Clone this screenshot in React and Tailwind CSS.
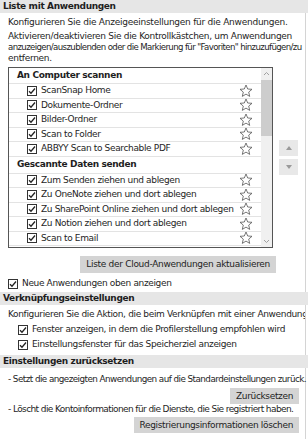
import React from 'react';

const Check = () => (
    <span className="w-[10px] h-[10px] border border-[#333] bg-white flex items-center justify-center shrink-0">
        <svg width="8" height="8" viewBox="0 0 8 8"><path d="M1 4.2 L3 6.2 L7 1.5" fill="none" stroke="#222" strokeWidth="1.3" /></svg>
    </span>
);

const Star = () => (
    <svg width="14" height="14" viewBox="0 0 14 14" className="shrink-0">
        <path d="M7 1 L8.7 5 L13 5.3 L9.7 8.1 L10.7 12.4 L7 10.1 L3.3 12.4 L4.3 8.1 L1 5.3 L5.3 5 Z" fill="none" stroke="#555" strokeWidth="0.8" strokeLinejoin="round" />
    </svg>
);

const SectionHeader = ({ title }) => (
    <div className="h-[13px] bg-[#e6e6e6] px-[3px] flex items-center font-bold">{title}</div>
);

const Row = ({ label }) => (
    <div className="h-[14.5px] border-b border-[#e3e3e3] flex items-center pl-[18px] pr-[8px] gap-[4px]">
        <Check />
        <span className="flex-1 whitespace-nowrap overflow-hidden">{label}</span>
        <Star />
    </div>
);

const scanApps = ['ScanSnap Home', 'Dokumente-Ordner', 'Bilder-Ordner', 'Scan to Folder', 'ABBYY Scan to Searchable PDF'];
const sendApps = ['Zum Senden ziehen und ablegen', 'Zu OneNote ziehen und dort ablegen', 'Zu SharePoint Online ziehen und dort ablegen', 'Zu Notion ziehen und dort ablegen', 'Scan to Email', 'Scan to Print'];

export default function App() {
    return (
        <div className="w-[308px] h-[439px] overflow-hidden bg-white text-[9px] leading-[11px] tracking-[-0.35px] text-[#1e1e1e] font-['DejaVu_Sans',sans-serif]">
            <SectionHeader title="Liste mit Anwendungen" />
            <div className="mr-[2px] border-r border-[#d4d4d4] pl-[8px] pr-[6px] pt-[4px] pb-[3px]">
                <p className="whitespace-nowrap tracking-[-0.25px]">Konfigurieren Sie die Anzeigeeinstellungen für die Anwendungen.</p>
                <p className="mt-[3px] whitespace-nowrap tracking-[-0.3px]">
                    Aktivieren/deaktivieren Sie die Kontrollkästchen, um Anwendungen<br />
                    <span className="text-[8.6px] tracking-[-0.62px]">anzuzeigen/auszublenden oder die Markierung für "Favoriten" hinzuzufügen/zu</span><br />
                    entfernen.
                </p>
                <div className="flex mt-[3px] gap-[6px]">
                    <div className="w-[265px] h-[181px] border border-[#555] flex overflow-hidden">
                        <div className="flex-1 overflow-hidden">
                            <div className="h-[16px] border-b border-[#e3e3e3] flex items-center pl-[8px] font-bold">An Computer scannen</div>
                            {scanApps.map(a => <Row key={a} label={a} />)}
                            <div className="h-[17px] flex items-center pl-[8px] font-bold border-b border-[#e3e3e3]">Gescannte Daten senden</div>
                            {sendApps.map(a => <Row key={a} label={a} />)}
                        </div>
                        <div className="w-[11px] bg-[#f0f0f0] flex flex-col">
                            <div className="h-[11px] flex items-center justify-center">
                                <svg width="7" height="5" viewBox="0 0 7 5"><path d="M1 4 L3.5 1.5 L6 4" fill="none" stroke="#a0a0a0" /></svg>
                            </div>
                            <div className="h-[56px] bg-[#cdcdcd] mt-[1px]" />
                            <div className="flex-1" />
                            <div className="h-[11px] flex items-center justify-center">
                                <svg width="7" height="5" viewBox="0 0 7 5"><path d="M1 1 L3.5 3.5 L6 1" fill="none" stroke="#a0a0a0" /></svg>
                            </div>
                        </div>
                    </div>
                    <div className="flex flex-col gap-[3px] pt-[73px]">
                        <div className="w-[19px] h-[16px] bg-[#e8e8e8] flex items-center justify-center">
                            <svg width="6" height="4" viewBox="0 0 6 4"><path d="M0 4 L3 0 L6 4 Z" fill="#9a9a9a" /></svg>
                        </div>
                        <div className="w-[19px] h-[16px] bg-[#e8e8e8] flex items-center justify-center">
                            <svg width="6" height="4" viewBox="0 0 6 4"><path d="M0 0 L3 4 L6 0 Z" fill="#9a9a9a" /></svg>
                        </div>
                    </div>
                </div>
                <div className="flex justify-end pr-[23px] mt-[8px]">
                    <button className="h-[17px] px-[6px] bg-[#d4d4d4] whitespace-nowrap tracking-[-0.3px]">Liste der Cloud-Anwendungen aktualisieren</button>
                </div>
                <label className="flex items-center gap-[4px] mt-[5px]">
                    <Check />
                    <span>Neue Anwendungen oben anzeigen</span>
                </label>
            </div>
            <SectionHeader title="Verknüpfungseinstellungen" />
            <div className="mr-[2px] border-r border-[#d4d4d4] pl-[8px] pt-[4px] pb-[5px] overflow-hidden">
                <p className="whitespace-nowrap">Konfigurieren Sie die Aktion, die beim Verknüpfen mit einer Anwendung ausgeführt werden soll.</p>
                <label className="flex items-center gap-[4px] mt-[4px] pl-[10px] whitespace-nowrap">
                    <Check />
                    <span>Fenster anzeigen, in dem die Profilerstellung empfohlen wird</span>
                </label>
                <label className="flex items-center gap-[4px] mt-[4px] pl-[10px] whitespace-nowrap">
                    <Check />
                    <span>Einstellungsfenster für das Speicherziel anzeigen</span>
                </label>
            </div>
            <SectionHeader title="Einstellungen zurücksetzen" />
            <div className="mr-[2px] border-r border-[#d4d4d4] pl-[8px] pr-[6px] pt-[6px] pb-[6px]">
                <p className="whitespace-nowrap text-[8.8px] tracking-[-0.55px]">- Setzt die angezeigten Anwendungen auf die Standardeinstellungen zurück.</p>
                <div className="flex justify-end mt-[3px]">
                    <button className="h-[16px] px-[6px] bg-[#d4d4d4] tracking-[-0.35px]">Zurücksetzen</button>
                </div>
                <p className="whitespace-nowrap leading-[10px] tracking-[-0.6px]">- Löscht die Kontoinformationen für die Dienste, die Sie registriert haben.</p>
                <div className="flex justify-end mt-[3px]">
                    <button className="h-[16px] px-[6px] bg-[#d4d4d4] tracking-[-0.35px]">Registrierungsinformationen löschen</button>
                </div>
            </div>
        </div>
    );
}
